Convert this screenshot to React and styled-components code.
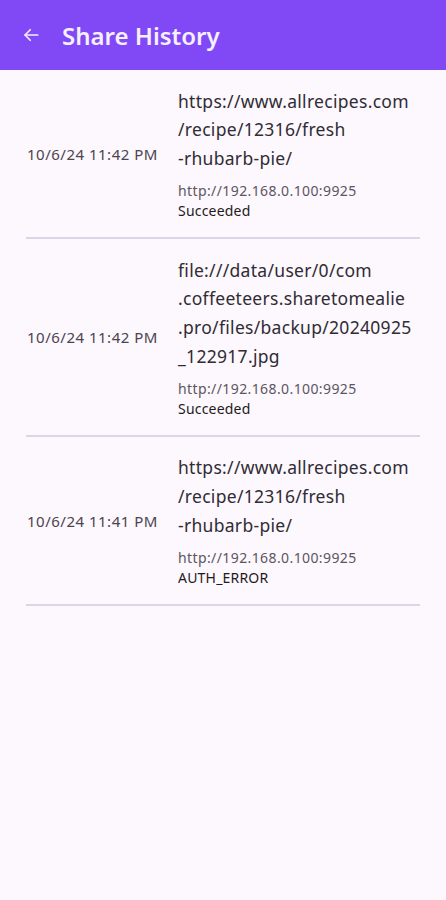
import React from "react";
import styled, { createGlobalStyle } from "styled-components";

const Global = createGlobalStyle`
  html, body { margin: 0; padding: 0; background: #fdf7fe; }
  body { font-family: "Noto Sans", Roboto, sans-serif; }
`;

const Page = styled.div`
  min-height: 900px;
  background: #fdf7fe;
`;

const AppBar = styled.header`
  height: 70px;
  background: #8149f6;
  display: flex;
  align-items: center;
  padding: 0 0 0 21px;
  gap: 21px;
  box-sizing: border-box;
`;

const BackButton = styled.button`
  border: 0;
  background: transparent;
  padding: 0;
  width: 20px;
  height: 20px;
  display: flex;
  align-items: center;
  justify-content: center;
  color: #f4ecff;
`;

const Title = styled.h1`
  margin: 0;
  font-family: "Noto Sans", Roboto, sans-serif;
  font-size: 24px;
  font-weight: 600;
  color: #f6efff;
`;

const List = styled.div`
  padding: 0 26px;
  display: flex;
  flex-direction: column;
`;

const Row = styled.div`
  display: grid;
  grid-template-columns: 152px 1fr;
  align-items: center;
  padding: 16.5px 0 16px;
  border-bottom: 2px solid #dcd5ea;
`;

const DateText = styled.div`
  font-size: 15px;
  letter-spacing: 0.5px;
  color: #4a454f;
  padding-left: 1px;
  white-space: nowrap;
`;

const Content = styled.div`
  display: flex;
  flex-direction: column;
`;

const Uri = styled.div`
  font-size: 17.5px;
  letter-spacing: 0.3px;
  line-height: 28.7px;
  color: #2f2c33;
`;

const UriLine = styled.span`
  display: block;
  white-space: nowrap;
`;

const Server = styled.div`
  margin-top: 7.5px;
  font-size: 14px;
  letter-spacing: 0.4px;
  line-height: 21px;
  color: #5b5660;
`;

const Status = styled.div`
  font-size: 14px;
  letter-spacing: 0.2px;
  line-height: 20px;
  color: #1d1b20;
`;

const entries = [
  {
    date: "10/6/24 11:42 PM",
    lines: ["https://www.allrecipes.com", "/recipe/12316/fresh", "-rhubarb-pie/"],
    server: "http://192.168.0.100:9925",
    status: "Succeeded",
  },
  {
    date: "10/6/24 11:42 PM",
    lines: [
      "file:///data/user/0/com",
      ".coffeeteers.sharetomealie",
      ".pro/files/backup/20240925",
      "_122917.jpg",
    ],
    server: "http://192.168.0.100:9925",
    status: "Succeeded",
  },
  {
    date: "10/6/24 11:41 PM",
    lines: ["https://www.allrecipes.com", "/recipe/12316/fresh", "-rhubarb-pie/"],
    server: "http://192.168.0.100:9925",
    status: "AUTH_ERROR",
  },
];

export default function App() {
  return (
    <Page>
      <Global />
      <AppBar>
        <BackButton aria-label="Back">
          <svg width="18" height="18" viewBox="0 0 24 24" fill="none" stroke="currentColor" strokeWidth="2.2" strokeLinecap="round" strokeLinejoin="round">
            <path d="M21 12H4" />
            <path d="M11 5l-7 7 7 7" />
          </svg>
        </BackButton>
        <Title>Share History</Title>
      </AppBar>
      <List>
        {entries.map((e, i) => (
          <Row key={i}>
            <DateText>{e.date}</DateText>
            <Content>
              <Uri>
                {e.lines.map((l, j) => (
                  <UriLine key={j}>{l}</UriLine>
                ))}
              </Uri>
              <Server>{e.server}</Server>
              <Status>{e.status}</Status>
            </Content>
          </Row>
        ))}
      </List>
    </Page>
  );
}
